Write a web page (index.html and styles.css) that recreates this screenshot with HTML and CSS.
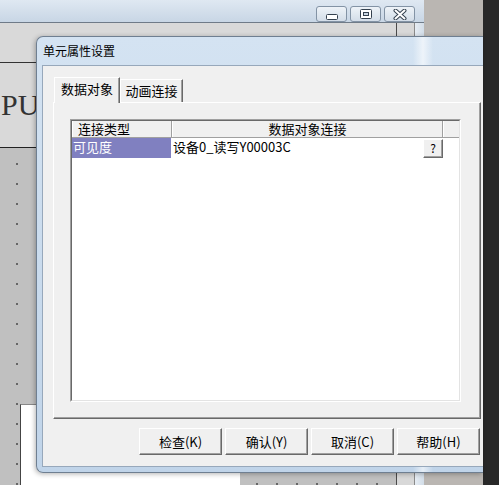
FILE: index.html
```html
<!DOCTYPE html>
<html lang="zh-CN">
<head>
    <meta charset="UTF-8">
    <title>单元属性设置</title>
    <link rel="stylesheet" href="styles.css">
</head>
<body>
    <div class="desktop">
        <!-- Background application window -->
        <div class="app">
            <div class="app-title">
                <div class="caption-btns">
                    <span class="cap-btn">
                        <svg class="ico-min" width="12" height="6" viewBox="0 0 12 6"><rect x="0.5" y="0.5" width="11" height="5" rx="1" fill="#fff" stroke="#34404e"/></svg>
                    </span>
                    <span class="cap-btn">
                        <svg width="12" height="10" viewBox="0 0 12 10"><rect x="0.5" y="0.5" width="11" height="9" rx="1" fill="#fff" stroke="#34404e"/><rect x="3.5" y="3.5" width="5" height="3" fill="#c9d5e2" stroke="#34404e"/></svg>
                    </span>
                    <span class="cap-btn">
                        <svg width="14" height="11" viewBox="0 0 14 11"><path d="M2.5 1.5 L11.5 9.5 M11.5 1.5 L2.5 9.5" stroke="#34404e" stroke-width="4" stroke-linecap="round"/><path d="M2.5 1.5 L11.5 9.5 M11.5 1.5 L2.5 9.5" stroke="#fff" stroke-width="2" stroke-linecap="round"/></svg>
                    </span>
                </div>
            </div>
            <div class="app-body">
                <div class="workspace">
                    <div class="toolbar"></div>
                    <div class="canvas-top"><span class="big-label">PU接</span></div>
                    <div class="canvas-grid">
                        <div class="page"></div>
                    </div>
                </div>
                <div class="vscroll"></div>
                <div class="app-frame"></div>
            </div>
        </div>
        <div class="side"></div>
        <div class="edge"></div>

        <!-- Dialog -->
        <div class="dialog">
            <div class="dialog-title">单元属性设置</div>
            <div class="dialog-client">
                <div class="tabs">
                    <div class="tab active">数据对象</div>
                    <div class="tab">动画连接</div>
                </div>
                <div class="tab-panel">
                    <div class="list">
                        <div class="list-body">
                            <div class="list-head">
                                <div class="col col-type">连接类型</div>
                                <div class="col col-link">数据对象连接</div>
                                <div class="col col-rest"></div>
                            </div>
                            <div class="list-row">
                                <div class="cell cell-type selected">可见度</div>
                                <div class="cell cell-link">
                                    <span>设备0_读写Y00003C</span>
                                    <span class="mini-btn">?</span>
                                </div>
                            </div>
                        </div>
                    </div>
                </div>
                <div class="actions">
                    <button class="btn">检查(K)</button>
                    <button class="btn">确认(Y)</button>
                    <button class="btn">取消(C)</button>
                    <button class="btn">帮助(H)</button>
                </div>
            </div>
        </div>
    </div>
</body>
</html>
```

FILE: styles.css
```css
/* General */
* {
    box-sizing: border-box;
}

body {
    margin: 0;
    width: 499px;
    height: 485px;
    overflow: hidden;
    font-family: "Noto Sans CJK SC", sans-serif;
    font-size: 13px;
    color: #000;
    background: #282828;
}

.desktop {
    position: relative;
    display: flex;
    height: 485px;
}

/* Background application window */
.app {
    width: 424px;
    display: flex;
    flex-direction: column;
}

.app-title {
    height: 26px;
    background: linear-gradient(#dfe8f2, #c8d6e5);
    border-bottom: 1px solid #6f7b88;
    display: flex;
    justify-content: flex-end;
    padding: 6px 9px 0 0;
}

.caption-btns {
    display: flex;
    gap: 3px;
    height: 16px;
}

.cap-btn {
    width: 31px;
    height: 16px;
    border: 1px solid #8393a5;
    border-radius: 3px;
    background: linear-gradient(#eef3f8, #d3dde8);
    display: flex;
    align-items: center;
    justify-content: center;
}

.ico-min {
    margin-top: 5px;
}

.app-body {
    flex: 1;
    display: flex;
}

.workspace {
    width: 397px;
    display: flex;
    flex-direction: column;
    border-right: 1px solid #4a4a4a;
}

.toolbar {
    height: 40px;
    background: #d9d9d9;
    border-bottom: 1px solid #333;
}

.canvas-top {
    height: 85px;
    background: #d9d9d9;
    border-bottom: 1px solid #222;
    padding: 27px 0 0 1px;
}

.big-label {
    font-family: "Liberation Serif", "Noto Sans CJK SC", serif;
    font-size: 30px;
    line-height: 30px;
    color: #333;
}

.canvas-grid {
    flex: 1;
    background-color: #c0c0c0;
    background-image: radial-gradient(circle, #666 0.8px, transparent 1.2px);
    background-size: 20px 20px;
    background-position: 7px 6px;
    padding: 256px 0 0 20px;
}

.page {
    width: 220px;
    height: 100px;
    background: #fff;
    border-left: 1px solid #444;
    border-top: 1px solid #888;
}

.vscroll {
    width: 18px;
    background: #d8d8d8;
    border-right: 1px solid #8a8a8a;
}

.app-frame {
    flex: 1;
    background: linear-gradient(to right, #e6ecf3, #d2dde8);
}

.side {
    width: 59px;
    background: #bab6b2;
}

.edge {
    flex: 1;
    background: #282828;
}

/* Dialog */
.dialog {
    position: absolute;
    left: 36px;
    top: 36px;
    width: 447px;
    height: 437px;
    border: 1px solid #6f7f91;
    border-right: none;
    border-radius: 7px 0 0 7px;
    background:
        linear-gradient(to right, transparent 376px, rgba(255, 255, 255, 0.6) 386px, transparent 396px),
        linear-gradient(#d4e3f2, #c0d4e9);
    box-shadow: -1px 1px 5px rgba(0, 0, 0, 0.3);
    padding: 0 0 5px 5px;
    display: flex;
    flex-direction: column;
}

.dialog-title {
    height: 28px;
    line-height: 28px;
    padding-left: 1px;
    font-size: 12px;
}

.dialog-client {
    flex: 1;
    background: #f0f0f0;
    border: 1px solid #97a8bb;
    border-right: none;
    padding: 11px 3px 0 10px;
}

.tabs {
    display: flex;
    align-items: flex-end;
    height: 26px;
    margin-left: 1px;
    margin-bottom: -1px;
    position: relative;
    z-index: 1;
}

.tab {
    width: 63px;
    height: 23px;
    margin-bottom: 1px;
    line-height: 21px;
    text-align: center;
    background: #f0f0f0;
    border: 1px solid;
    border-color: #fff #696969 transparent #fff;
    border-bottom: none;
    box-shadow: inset -1px 0 #a0a0a0;
}

.tab.active {
    width: 66px;
    height: 26px;
    margin-bottom: 0;
    line-height: 22px;
}

.tab-panel {
    width: 428px;
    height: 317px;
    border: 1px solid;
    border-color: #fff #696969 #696969 #fff;
    box-shadow: inset -1px -1px #a0a0a0;
    padding: 16px 0 0 16px;
}

/* Grid list */
.list {
    width: 391px;
    height: 283px;
    border: 1px solid;
    border-color: #a0a0a0 #fff #fff #a0a0a0;
}

.list-body {
    height: 100%;
    background: #fff;
    border: 1px solid;
    border-color: #696969 #e3e3e3 #e3e3e3 #696969;
}

.list-head {
    display: flex;
    height: 17px;
    background: #f0f0f0;
    border-bottom: 1px solid #a0a0a0;
}

.col {
    line-height: 16px;
    border-right: 1px solid #a0a0a0;
    border-left: 1px solid #fff;
}

.col-type {
    width: 100px;
    padding-left: 5px;
}

.col-link {
    width: 271px;
    text-align: center;
}

.col-rest {
    flex: 1;
    border-right: none;
}

.list-row {
    display: flex;
    height: 20px;
}

.cell {
    line-height: 18px;
    padding-left: 1px;
}

.cell-type {
    width: 99px;
}

.cell-type.selected {
    background: #8080c0;
    color: #fff;
}

.cell-link {
    width: 272px;
    display: flex;
    align-items: flex-start;
    padding-left: 2px;
}

.mini-btn {
    margin-left: auto;
    margin-top: 1px;
    width: 20px;
    height: 19px;
    line-height: 16px;
    font-size: 12px;
    text-align: center;
    background: #f0f0f0;
    border: 1px solid;
    border-color: #fff #696969 #696969 #fff;
    box-shadow: inset -1px -1px #a0a0a0;
}

/* Bottom buttons */
.actions {
    display: flex;
    justify-content: flex-end;
    gap: 3px;
    margin-top: 9px;
}

.btn {
    width: 83px;
    height: 27px;
    padding: 0;
    font-family: "Noto Sans CJK SC", sans-serif;
    font-size: 13px;
    color: #000;
    background: #f0f0f0;
    border: 1px solid;
    border-color: #fff #696969 #696969 #fff;
    box-shadow: inset -1px -1px #a0a0a0;
}
```
